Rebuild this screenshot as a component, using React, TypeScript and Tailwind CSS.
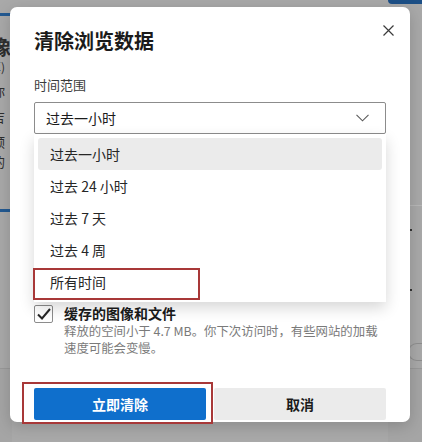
const ranges = ["过去一小时", "过去 24 小时", "过去 7 天", "过去 4 周", "所有时间"]

function IconClose() {
  return (
    <svg width="11" height="11" viewBox="0 0 11 11" fill="none" stroke="#3b3b3b" strokeWidth="1.2">
      <path d="M0.5 0.5l10 10M10.5 0.5l-10 10" />
    </svg>
  )
}

function IconChevron() {
  return (
    <svg width="13" height="8" viewBox="0 0 13 8" fill="none" stroke="#5a5a5a" strokeWidth="1.1">
      <path d="M0.5 0.8l6 6l6 -6" />
    </svg>
  )
}

function IconCheck() {
  return (
    <svg width="14" height="12" viewBox="0 0 14 12" fill="none" stroke="#262626" strokeWidth="2">
      <path d="M1 6.5l4 4l8 -9.5" />
    </svg>
  )
}

function BackgroundPage() {
  return (
    <div className="flex h-full w-full overflow-hidden bg-[#a9a9a9] text-[#2e2e2e]">
      <div className="flex w-[12px] flex-col">
        <div className="h-[13px]" />
        <div className="h-[3px] w-[12px] bg-[#235a92]" />
        <div className="ml-[-9px] mt-[18px] flex flex-col text-[13px] leading-[22px]">
          <span className="text-[20px] font-bold leading-[26px]">像</span>
          <span className="ml-[-2px] text-[12px] leading-[14px]">享)</span>
          <span className="mt-[6px] ml-[1px]">你</span>
          <span className="mt-[4px] ml-[1px]">吉</span>
          <span className="mt-[3px] ml-[1px]">预</span>
          <span className="mt-[-2px] ml-[1px]">的</span>
        </div>
        <div className="mt-[36px] h-[3px] w-[12px] bg-[#235a92]" />
        <div className="flex-1" />
        <div className="h-px bg-[#999999]" />
        <div className="h-[73px] bg-[#a5a5a5]" />
      </div>
      <div className="flex-1" />
      <div className="flex w-[34px] flex-col">
        <div className="h-[4px] rounded-bl-[10px] bg-[#1c4f86]" />
        <div className="h-[201px]" />
        <div className="h-px bg-[#b8b8b8]" />
        <div className="flex flex-col items-end gap-[58px] pr-[10px] pt-[23px]">
          <div className="h-[2px] w-[2px] bg-[#333]" />
          <div className="h-[2px] w-[2px] bg-[#333]" />
        </div>
        <div className="ml-auto mt-[52px] h-[18px] w-[14px] rounded-l-full border border-r-0 border-[#8e8e8e]" />
        <div className="flex-1" />
        <div className="h-px bg-[#999999]" />
        <div className="h-[73px] bg-[#a5a5a5]" />
      </div>
    </div>
  )
}

export default function App() {
  return (
    <div
      className="relative h-[442px] w-[422px] overflow-hidden"
      style={{ fontFamily: '"Noto Sans CJK SC", "Noto Sans", sans-serif' }}
    >
      <BackgroundPage />

      <div className="absolute left-[10px] top-[7px] flex h-[415px] w-[400px] flex-col rounded-[7px] bg-white px-6 pt-[20px] text-[#1b1b1b] shadow-[0_4px_16px_rgba(0,0,0,0.18)]">
        <button className="absolute right-[14px] top-[15px] flex h-[16px] w-[16px] items-center justify-center">
          <IconClose />
        </button>

        <h1 className="text-[20px] font-bold leading-[28px]">清除浏览数据</h1>

        <div className="mt-[20px] text-[13px] leading-[20px] text-[#3a3a3a]">时间范围</div>

        <div className="relative mt-[7px]">
          <div className="flex h-[32px] items-center justify-between rounded-[2px] border border-[#8c8c8c] pl-[11px] pr-[16px] text-[14px]">
            <span>过去一小时</span>
            <IconChevron />
          </div>

          <div className="absolute left-0 right-0 top-[32px] z-10 flex flex-col bg-white p-[4px] shadow-[0_6px_14px_rgba(0,0,0,0.16)]">
            {ranges.map((r, i) => (
              <div
                key={r}
                className={`flex h-[32px] items-center rounded-[3px] pl-[12px] text-[14px] text-[#262626] ${i === 0 ? "bg-[#ebebeb]" : ""}`}
              >
                {r}
              </div>
            ))}
            <div className="absolute left-[-1px] top-[134px] h-[32px] w-[167px] border-2 border-[#a83838]" />
          </div>
        </div>

        <div className="mt-[170px] flex gap-[11px]">
          <div className="mt-[1px] flex h-[18px] w-[19px] shrink-0 items-center justify-center rounded-[2px] border border-[#8c8c8c]">
            <IconCheck />
          </div>
          <div className="flex flex-col">
            <span className="text-[14px] font-bold leading-[18px]">缓存的图像和文件</span>
            <span className="mt-[1px] text-[12.4px] leading-[17px] text-[#7a7a7a]">
              释放的空间小于 4.7 MB。你下次访问时，有些网站的加载
              <br />
              速度可能会变慢。
            </span>
          </div>
        </div>

        <div className="relative mt-[31px] flex gap-[8px]">
          <button className="h-[32px] flex-1 rounded-[2px] bg-[#0f6fcc] text-[14px] font-bold text-white">立即清除</button>
          <button className="h-[32px] flex-1 rounded-[2px] bg-[#ebebeb] text-[14px] font-bold text-[#1b1b1b]">取消</button>
          <div className="absolute left-[-12px] top-[-6px] h-[42px] w-[191px] border-2 border-[#a83838]" />
        </div>
      </div>
    </div>
  )
}
